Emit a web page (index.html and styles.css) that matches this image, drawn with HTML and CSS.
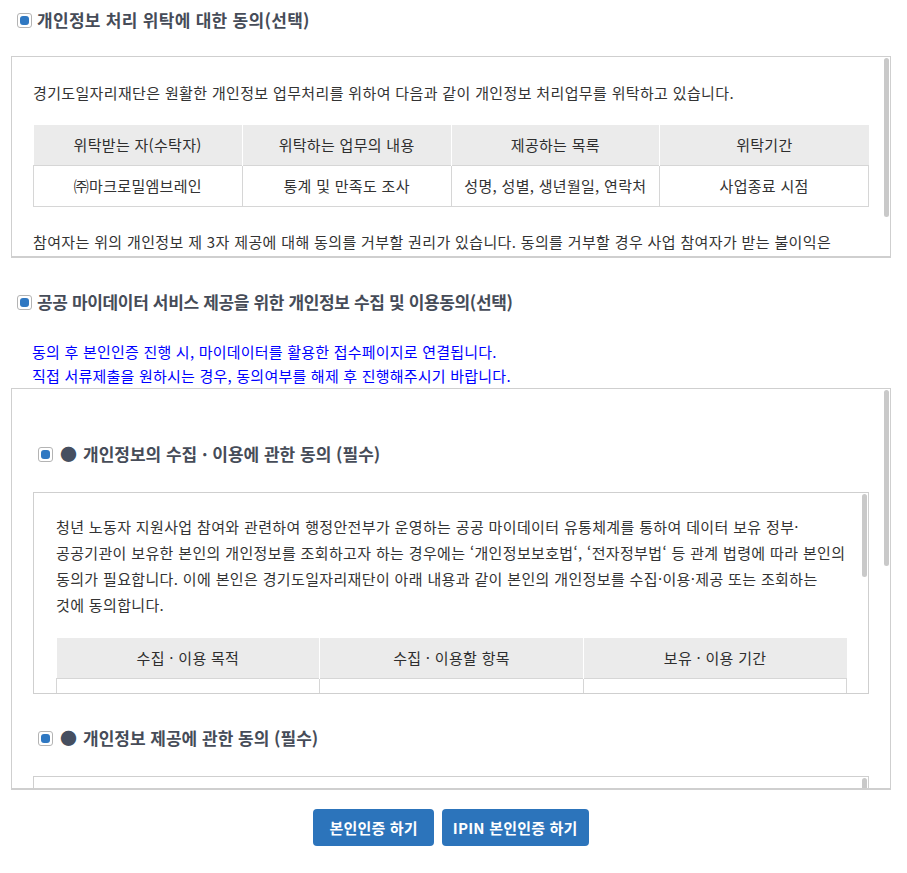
FILE: index.html
```html
<!DOCTYPE html>
<html lang="ko">
<head>
<meta charset="utf-8">
<title>개인정보 동의</title>
<link rel="stylesheet" href="styles.css">
</head>
<body>
<div class="wrap">
  <section class="consent">
    <h2 class="consent-title title-entrust"><span class="chk" aria-hidden="true"></span>개인정보 처리 위탁에 대한 동의(선택)</h2>
    <div class="scroll-frame frame-entrust">
      <div class="scroll-box box-entrust">
        <p class="txt">경기도일자리재단은 원활한 개인정보 업무처리를 위하여 다음과 같이 개인정보 처리업무를 위탁하고 있습니다.</p>
        <table class="grid">
          <thead>
            <tr><th>위탁받는 자(수탁자)</th><th>위탁하는 업무의 내용</th><th>제공하는 목록</th><th>위탁기간</th></tr>
          </thead>
          <tbody>
            <tr><td>㈜마크로밀엠브레인</td><td>통계 및 만족도 조사</td><td>성명, 성별, 생년월일, 연락처</td><td>사업종료 시점</td></tr>
          </tbody>
        </table>
        <p class="txt">참여자는 위의 개인정보 제 3자 제공에 대해 동의를 거부할 권리가 있습니다. 동의를 거부할 경우 사업 참여자가 받는 불이익은 없습니다.</p>
      </div>
      <span class="thumb thumb-entrust" aria-hidden="true"></span>
    </div>
  </section>

  <section class="consent consent-mydata">
    <h2 class="consent-title title-mydata"><span class="chk" aria-hidden="true"></span>공공 마이데이터 서비스 제공을 위한 개인정보 수집 및 이용동의(선택)</h2>
    <p class="notice">동의 후 본인인증 진행 시, 마이데이터를 활용한 접수페이지로 연결됩니다.<br>직접 서류제출을 원하시는 경우, 동의여부를 해제 후 진행해주시기 바랍니다.</p>
    <div class="scroll-frame">
      <div class="scroll-box box-mydata">
        <div class="sub">
          <h3 class="sub-title"><span class="chk" aria-hidden="true"></span><span class="dot">●</span>개인정보의 수집 · 이용에 관한 동의 (필수)</h3>
          <div class="scroll-frame">
            <div class="inner-box">
              <p class="txt txt-lines">청년 노동자 지원사업 참여와 관련하여 행정안전부가 운영하는 공공 마이데이터 유통체계를 통하여 데이터 보유 정부·<br>공공기관이 보유한 본인의 개인정보를 조회하고자 하는 경우에는 ‘개인정보보호법‘, ‘전자정부법‘ 등 관계 법령에 따라 본인의<br>동의가 필요합니다. 이에 본인은 경기도일자리재단이 아래 내용과 같이 본인의 개인정보를 수집·이용·제공 또는 조회하는<br>것에 동의합니다.</p>
              <table class="grid grid-3">
                <thead>
                  <tr><th>수집 · 이용 목적</th><th>수집 · 이용할 항목</th><th>보유 · 이용 기간</th></tr>
                </thead>
                <tbody>
                  <tr><td>청년 노동자 지원사업 신청자격 확인 및 사업 운영</td><td>성명, 생년월일, 주소, 연락처, 고용보험 가입이력, 소득정보</td><td>사업종료 후 5년</td></tr>
                  <tr><td>공공 마이데이터를 통한 증빙서류 확인</td><td>주민등록표 초본, 건강보험 자격득실 확인서</td><td>사업종료 후 5년</td></tr>
                </tbody>
              </table>
              <p class="txt">※ 귀하는 위의 개인정보 수집·이용에 대한 동의를 거부할 권리가 있습니다. 다만, 동의를 거부할 경우 마이데이터를 활용한 접수가 제한됩니다.</p>
            </div>
            <span class="thumb thumb-collect" aria-hidden="true"></span>
          </div>
        </div>
        <div class="sub">
          <h3 class="sub-title"><span class="chk" aria-hidden="true"></span><span class="dot">●</span>개인정보 제공에 관한 동의 (필수)</h3>
          <div class="scroll-frame">
            <div class="inner-box">
              <p class="txt">경기도일자리재단은 공공 마이데이터 서비스 이용을 위하여 아래와 같이 본인의 개인정보를 행정안전부에 제공합니다.</p>
              <table class="grid grid-3">
                <thead>
                  <tr><th>제공받는 자</th><th>제공 항목</th><th>보유 · 이용 기간</th></tr>
                </thead>
                <tbody>
                  <tr><td>행정안전부</td><td>성명, 주민등록번호, 연락처</td><td>제공 목적 달성 시까지</td></tr>
                  <tr><td>정보보유기관</td><td>성명, 주민등록번호</td><td>제공 목적 달성 시까지</td></tr>
                </tbody>
              </table>
              <p class="txt">※ 귀하는 위의 개인정보 제공에 대한 동의를 거부할 권리가 있습니다.</p>
            </div>
            <span class="thumb thumb-provide" aria-hidden="true"></span>
          </div>
        </div>
        <div class="sub">
          <h3 class="sub-title"><span class="chk" aria-hidden="true"></span><span class="dot">●</span>고유식별정보 처리에 관한 동의 (필수)</h3>
          <div class="scroll-frame">
            <div class="inner-box">
              <p class="txt">경기도일자리재단은 공공 마이데이터 조회를 위하여 아래와 같이 본인의 고유식별정보를 처리합니다.</p>
              <table class="grid grid-3">
                <thead>
                  <tr><th>처리 목적</th><th>처리 항목</th><th>보유 · 이용 기간</th></tr>
                </thead>
                <tbody>
                  <tr><td>본인 확인 및 자격 조회</td><td>주민등록번호</td><td>사업종료 후 5년</td></tr>
                </tbody>
              </table>
            </div>
          </div>
        </div>
      </div>
      <span class="thumb thumb-mydata" aria-hidden="true"></span>
    </div>
  </section>

  <div class="actions">
    <button type="button" class="btn">본인인증 하기</button>
    <button type="button" class="btn btn-ipin">IPIN 본인인증 하기</button>
  </div>
</div>
</body>
</html>
```

FILE: styles.css
```css
* { box-sizing: border-box; }

body {
  margin: 0;
  background: #fff;
  color: #333;
  font-family: "Noto Sans CJK KR", "Noto Sans", "Liberation Sans", sans-serif;
  word-break: keep-all;
}

.wrap {
  padding: 8px 16px 0 11px;
}

.consent-mydata {
  margin-top: 32px;
}

.consent-title,
.sub-title {
  margin: 0;
  display: flex;
  align-items: center;
  font-size: 17px;
  font-weight: 700;
  line-height: 24px;
  color: #464c58;
}

.consent-title {
  padding-left: 6px;
  gap: 5px;
}

.title-entrust { letter-spacing: 0.3px; }
.title-mydata { letter-spacing: -0.35px; }

.chk {
  flex: none;
  width: 15px;
  height: 15px;
  border: 1px solid #b4b4b4;
  border-radius: 3px;
  background: #fff;
  display: flex;
  align-items: center;
  justify-content: center;
}

.chk::after {
  content: "";
  width: 9px;
  height: 9px;
  border-radius: 3px;
  background: #2f78c2;
}

/* scroll containers with a drawn thin scrollbar thumb */
.scroll-frame {
  position: relative;
}

.frame-entrust {
  margin-top: 24px;
}

.scroll-box,
.inner-box {
  overflow-y: auto;
  scrollbar-width: none;
}

.scroll-box::-webkit-scrollbar,
.inner-box::-webkit-scrollbar {
  display: none;
}

.scroll-box {
  border: 1px solid #cfcfcf;
  border-bottom-width: 2px;
}

.box-entrust {
  height: 202px;
  padding: 23px 21px 25px 21px;
}

.box-mydata {
  height: 402px;
  padding: 53px 21px 32px 21px;
}

.thumb {
  position: absolute;
  right: 2px;
  top: 2px;
  width: 5px;
  border-radius: 3px;
  background: #c9c9c9;
}

.thumb-entrust { height: 159px; }
.thumb-mydata { height: 176px; }
.thumb-collect { height: 83px; }
.thumb-provide { height: 120px; }

.txt {
  margin: 0;
  font-size: 15px;
  line-height: 26px;
  letter-spacing: 0.35px;
  color: #333;
}

.txt-lines {
  white-space: nowrap;
}

.notice {
  margin: 26px 0 0;
  padding-left: 21px;
  font-size: 15px;
  line-height: 24px;
  letter-spacing: 0.22px;
  color: #0000ff;
}

.grid {
  width: 100%;
  margin: 19px 0 22px;
  border-collapse: collapse;
  table-layout: fixed;
  font-size: 15px;
  letter-spacing: 0.3px;
  color: #333;
}

.grid th {
  height: 40px;
  padding: 0 8px;
  background: #ebebeb;
  font-weight: 400;
  color: #2e2e2e;
  border-left: 1px solid #fff;
  border-right: 1px solid #fff;
}

.grid th:first-child { border-left: 0; }
.grid th:last-child { border-right: 0; }

.grid td {
  height: 41px;
  padding: 8px;
  text-align: center;
  line-height: 24px;
  border: 1px solid #d6d6d6;
}

.grid-3 td {
  padding: 16px 12px;
}

.sub + .sub {
  margin-top: 32px;
}

.sub-title {
  padding-left: 5px;
  margin-bottom: 26px;
  gap: 7px;
}

.dot {
  font-size: 17px;
  color: #464f60;
  margin-right: -1px;
}

.inner-box {
  height: 202px;
  border: 1px solid #cfcfcf;
  padding: 21px 21px 24px 22px;
}

.grid-3 {
  margin: 20px 0 20px;
}

.actions {
  margin-top: 19px;
  display: flex;
  justify-content: center;
  gap: 8px;
}

.btn {
  height: 37px;
  padding: 0 16px;
  border: 0;
  border-radius: 4px;
  background: #2c74bb;
  color: #fff;
  font-family: inherit;
  font-size: 15px;
  font-weight: 700;
  letter-spacing: 0.2px;
}

.btn-ipin {
  padding: 0 11px;
}
```
